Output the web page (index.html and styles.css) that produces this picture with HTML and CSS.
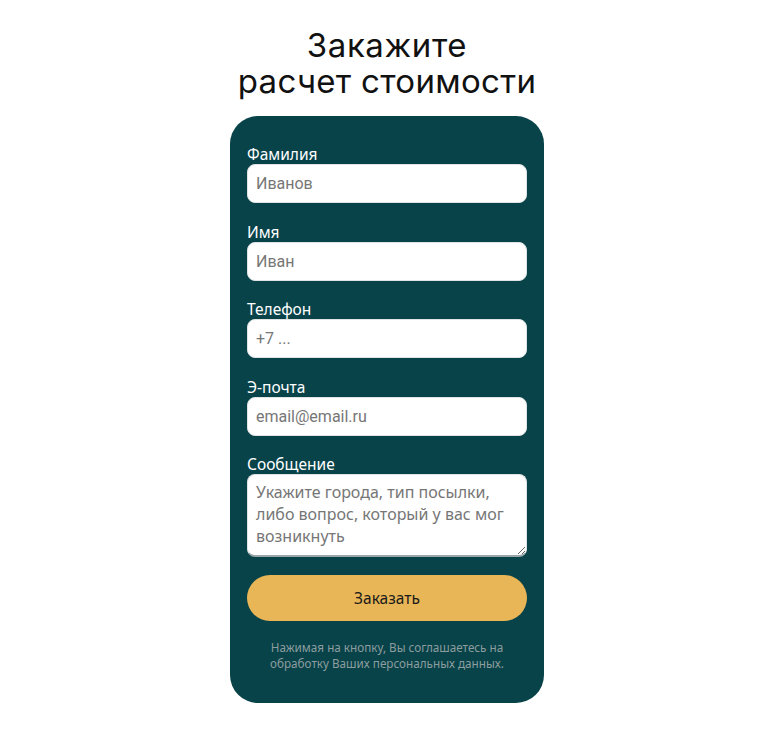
FILE: index.html
```html
<!DOCTYPE html>
<html lang="ru">
<head>
<meta charset="utf-8">
<title>Заказать расчет</title>
<link rel="stylesheet" href="styles.css">
</head>
<body>
<main class="page">
  <h1 class="title"><span class="title-line">Закажите</span><span class="title-line">расчет стоимости</span></h1>
  <form class="card">
    <label class="field">
      <span class="label">Фамилия</span>
      <input class="input" type="text" placeholder="Иванов">
    </label>
    <label class="field">
      <span class="label">Имя</span>
      <input class="input" type="text" placeholder="Иван">
    </label>
    <label class="field">
      <span class="label">Телефон</span>
      <input class="input" type="text" placeholder="+7 ...">
    </label>
    <label class="field">
      <span class="label">Э-почта</span>
      <input class="input" type="text" placeholder="email@email.ru">
    </label>
    <label class="field field-last">
      <span class="label">Сообщение</span>
      <textarea class="input textarea" placeholder="Укажите города, тип посылки, либо вопрос, который у вас мог возникнуть"></textarea>
    </label>
    <button class="button" type="button">Заказать</button>
    <p class="note">Нажимая на кнопку, Вы соглашаетесь на обработку Ваших персональных данных.</p>
  </form>
</main>
</body>
</html>
```
FILE: styles.css
```css
html, body {
  margin: 0;
  padding: 0;
  background: #ffffff;
}
.page {
  display: flex;
  flex-direction: column;
  align-items: center;
  padding: 27px 0 0 11px;
}
.title {
  margin: 0 0 17px 0;
  font-family: "Inter", "Noto Sans", sans-serif;
  font-weight: 400;
  font-size: 33px;
  line-height: 36px;
  text-align: center;
  color: #111111;
  letter-spacing: 0.3px;
  display: flex;
  flex-direction: column;
  align-items: center;
}
.title-line {
  display: block;
  height: 36px;
}
.title-line:first-child {
  letter-spacing: 0.6px;
}
.card {
  box-sizing: border-box;
  width: 314px;
  background: #08434a;
  border-radius: 28px;
  padding: 29px 17px 32px 17px;
  display: flex;
  flex-direction: column;
  font-family: "Noto Sans", sans-serif;
}
.field {
  display: flex;
  flex-direction: column;
  margin-bottom: 19.5px;
}
.field-last {
  margin-bottom: 18px;
}
.label {
  color: #ffffff;
  font-size: 15.5px;
  line-height: 19px;
}
.input {
  box-sizing: border-box;
  height: 39px;
  width: 100%;
  border: 1px solid #dfe3e3;
  border-radius: 8px;
  background: #ffffff;
  padding: 0 8px;
  font-family: "Roboto", "Liberation Sans", sans-serif;
  font-size: 16px;
  color: #333;
  outline: none;
}
.input::placeholder {
  color: #767676;
}
.textarea {
  height: 83px;
  padding: 6px 8px;
  font-family: "Noto Sans", sans-serif;
  font-size: 16px;
  line-height: 22px;
  resize: vertical;
  border-bottom: 2px solid #9aa7a8;
}
.button {
  height: 46px;
  border: none;
  border-radius: 23px;
  background: #e8b657;
  color: #1a1a1a;
  font-family: "Noto Sans", sans-serif;
  font-size: 15.5px;
  cursor: pointer;
}
.note {
  margin: 18px 0 0 0;
  padding: 0 4px;
  text-align: center;
  color: #8c9d9e;
  font-size: 11.7px;
  line-height: 16px;
}
```
